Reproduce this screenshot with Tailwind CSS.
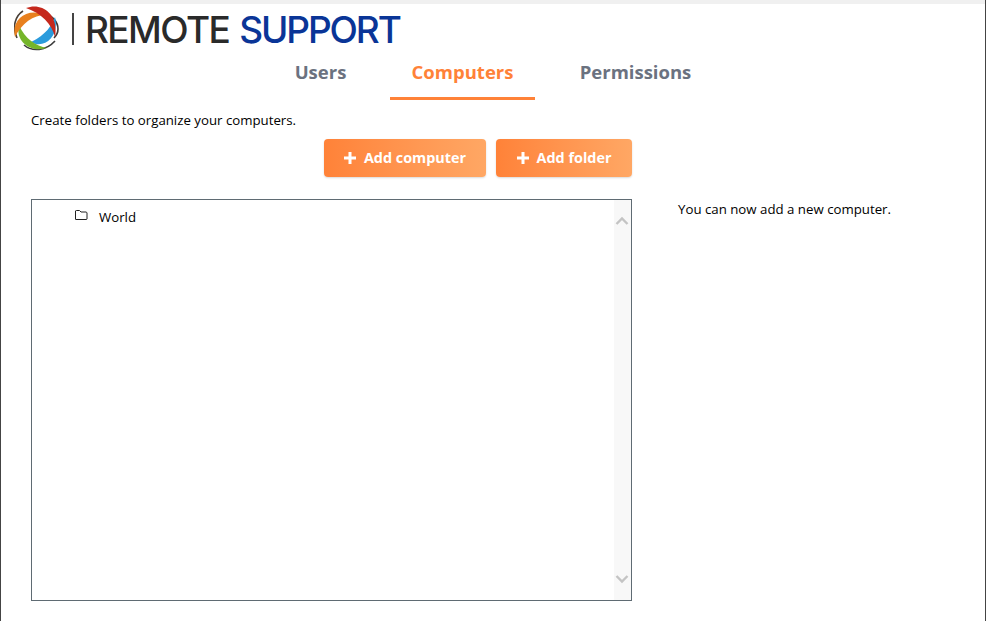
<!DOCTYPE html>
<html lang="en">
<head>
    <meta charset="UTF-8">
    <title>Remote Support</title>
    <script src="https://cdn.jsdelivr.net/npm/@tailwindcss/browser@4"></script>
</head>
<body class="bg-white text-black font-['Open_Sans',sans-serif] antialiased overflow-hidden">
    <div class="h-[621px] w-[986px] flex flex-col border-x border-[#444] overflow-hidden">
        <div class="h-[4px] bg-[#f0f0f0] shrink-0"></div>

        <!-- logo -->
        <header class="h-[46px] -ml-px bg-white flex items-center shrink-0">
            <svg class="ml-[14px] mt-[2px]" width="45" height="46" viewBox="0 0 45 46">
                <path d="M3 33C-2 22 1 11 9 6" fill="none" stroke="#4a4038" stroke-width="1.6"/>
                <path d="M30 8C38 10 44 17 44 24C44 28 42 31 40 33" fill="none" stroke="#3f3a3a" stroke-width="1.6"/>
                <path d="M10 40C18 47 32 46 41 36" fill="none" stroke="#3c3c3c" stroke-width="1.6"/>
                <path d="M17 37C30 45 46 31 41 12C38 20 32 30 17 37Z" fill="#2b9bdc"/>
                <path d="M5 20C1 36 16 48 33 43C22 41 11 34 5 20Z" fill="#75b52a"/>
                <path d="M1 32C-3 15 12 2 32 10C19 10 8 18 1 32Z" fill="#e8801e"/>
                <path d="M12 3C27 -3 45 8 41 32C38 19 27 8 12 3Z" fill="#c5281c"/>
            </svg>
            <div class="ml-[13px] mt-[4px] w-[2px] h-[32px] bg-[#444]"></div>
            <div class="ml-[11px] mt-[4px] flex gap-[10px] font-['Inter',sans-serif] text-[37px] font-medium leading-none whitespace-nowrap">
                <span class="tracking-[-1.6px] text-[#2a2a2a]">REMOTE</span>
                <span class="tracking-[-2.1px] text-[#0a3597]">SUPPORT</span>
            </div>
        </header>

        <!-- tabs -->
        <nav class="h-[50px] flex justify-center pl-[1px] text-[18.5px] font-bold text-[#6b7280] shrink-0">
            <div class="ml-[-1px] w-[93px] flex justify-center pt-[8px]">Users</div>
            <div class="ml-[23px] w-[145px] flex justify-center pt-[8px] text-[#ff8238] border-b-[3px] border-[#ff8238]">Computers</div>
            <div class="ml-[24px] w-[153px] flex justify-center pt-[8px]">Permissions</div>
        </nav>

        <main class="flex-1 flex pl-[30px]">
            <div class="w-[601px]">
                <p class="mt-[11px] text-[13.25px] leading-[18px]">Create folders to organize your computers.</p>
                <div class="mt-[10px] flex justify-end gap-[10px] text-[14.4px] font-bold text-white">
                    <button class="w-[162px] h-[38px] rounded-[4px] bg-gradient-to-r from-[#ff8238] to-[#ffa764] shadow-[0_1px_2px_rgba(0,0,0,0.15)] flex items-center justify-center gap-[8px]">
                        <svg width="12" height="12" viewBox="0 0 12 12"><path d="M6 0V12M0 6H12" stroke="white" stroke-width="3"/></svg>
                        Add computer
                    </button>
                    <button class="w-[136px] h-[38px] rounded-[4px] bg-gradient-to-r from-[#ff8238] to-[#ffa764] shadow-[0_1px_2px_rgba(0,0,0,0.15)] flex items-center justify-center gap-[8px]">
                        <svg width="12" height="12" viewBox="0 0 12 12"><path d="M6 0V12M0 6H12" stroke="white" stroke-width="3"/></svg>
                        Add folder
                    </button>
                </div>
                <div class="mt-[22px] h-[402px] border border-[#5f6b73] flex">
                    <div class="flex-1 pl-[42px] pt-[8px] flex items-start gap-[11px] text-[13.25px] leading-[18px]">
                        <svg class="mt-[1px]" width="14" height="12" viewBox="0 0 14 12" fill="none" stroke="#222" stroke-width="1"><path d="M1.5 10V2C1.5 1.5 2 1.5 2.5 1.5H5.5L7 3H12C12.5 3 13 3.5 13 4V10C13 10.5 12.5 10.5 12 10.5H2C1.5 10.5 1.5 10.5 1.5 10Z"/></svg>
                        World
                    </div>
                    <div class="w-[17px] bg-[#f8f8f8] flex flex-col justify-between items-center pt-[16px] pb-[16px] pr-[2px]">
                        <svg width="14" height="10" viewBox="0 0 14 10" fill="none" stroke="#c4c4c4" stroke-width="2.4"><path d="M1.5 8L7 2.5L12.5 8"/></svg>
                        <svg width="14" height="10" viewBox="0 0 14 10" fill="none" stroke="#c4c4c4" stroke-width="2.4"><path d="M1.5 2L7 7.5L12.5 2"/></svg>
                    </div>
                </div>
            </div>
            <p class="ml-[46px] mt-[100px] text-[13.25px] leading-[18px]">You can now add a new computer.</p>
        </main>
    </div>
</body>
</html>
